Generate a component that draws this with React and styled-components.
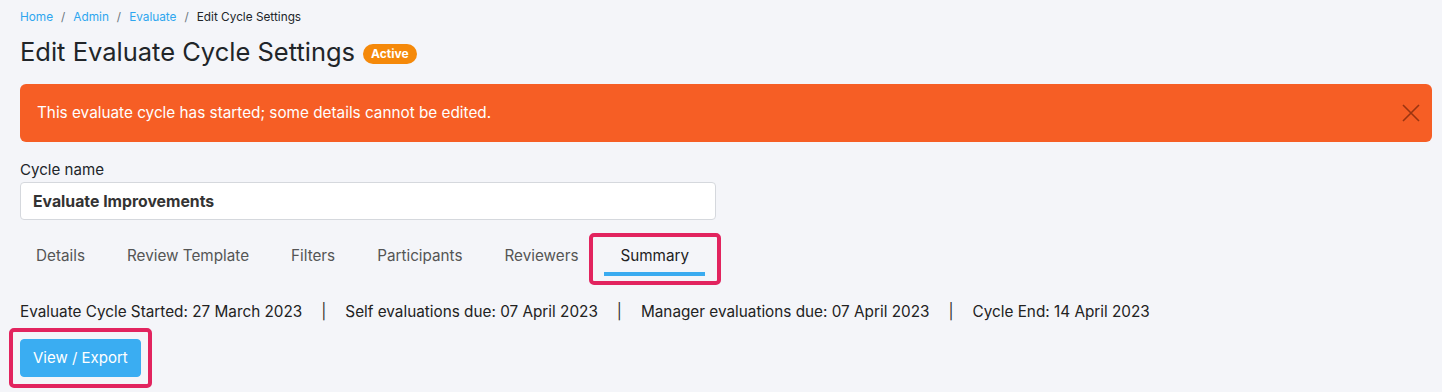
import styled, { createGlobalStyle } from "styled-components";

const GlobalStyle = createGlobalStyle`
  html, body {
    margin: 0;
    padding: 0;
    background: #f4f5f9;
  }
  body {
    font-family: Inter, "Noto Sans", sans-serif;
    color: #212529;
  }
`;

const tabs = ["Details", "Review Template", "Filters", "Participants", "Reviewers", "Summary"];

const dates = [
  "Evaluate Cycle Started: 27 March 2023",
  "Self evaluations due: 07 April 2023",
  "Manager evaluations due: 07 April 2023",
  "Cycle End: 14 April 2023",
];

const App = () => {
  return (
    <Page>
      <GlobalStyle />
      <Breadcrumb>
        <Crumb href="#">Home</Crumb>
        <Slash>/</Slash>
        <Crumb href="#">Admin</Crumb>
        <Slash>/</Slash>
        <Crumb href="#">Evaluate</Crumb>
        <Slash>/</Slash>
        <Current>Edit Cycle Settings</Current>
      </Breadcrumb>
      <TitleRow>
        <Title>Edit Evaluate Cycle Settings</Title>
        <Badge>Active</Badge>
      </TitleRow>
      <Alert>
        <span>This evaluate cycle has started; some details cannot be edited.</span>
        <CloseButton aria-label="Close">
          <svg width="18" height="18" viewBox="0 0 18 18" fill="none" stroke="currentColor" strokeWidth="1.6">
            <path d="M1 1L17 17M17 1L1 17" />
          </svg>
        </CloseButton>
      </Alert>
      <Field>
        <Label>Cycle name</Label>
        <Input defaultValue="Evaluate Improvements" />
      </Field>
      <TabList>
        {tabs.map((t) => (
          <Tab key={t} $active={t === "Summary"}>
            {t}
            {t === "Summary" && <Highlight $tab />}
          </Tab>
        ))}
      </TabList>
      <DatesLine>
        {dates.map((d, i) => (
          <span key={d}>
            {i > 0 && <Pipe>|</Pipe>}
            {d}
          </span>
        ))}
      </DatesLine>
      <ButtonWrap>
        <Button>View / Export</Button>
        <Highlight />
      </ButtonWrap>
    </Page>
  );
};

export default App;

const Page = styled.div`
  padding: 8px 10px 20px 20px;
`;

const Breadcrumb = styled.nav`
  display: flex;
  align-items: center;
  font-size: 11.8px;
  line-height: 18px;
`;

const Crumb = styled.a`
  color: #2ea6ef;
  text-decoration: none;
`;

const Slash = styled.span`
  color: #6c757d;
  margin: 0 8px;
`;

const Current = styled.span`
  color: #212529;
`;

const TitleRow = styled.div`
  display: flex;
  align-items: center;
  gap: 8px;
  margin-top: 9px;
  height: 34px;
`;

const Title = styled.h1`
  margin: 0;
  font-size: 25.5px;
  font-weight: 400;
  line-height: 34px;
  color: #212529;
`;

const Badge = styled.span`
  background: #f5890a;
  color: #fff;
  font-size: 12px;
  font-weight: 700;
  line-height: 14px;
  padding: 3px 8px;
  border-radius: 10px;
  margin-top: 4px;
`;

const Alert = styled.div`
  display: flex;
  align-items: center;
  justify-content: space-between;
  margin-top: 15px;
  background: #f65e25;
  color: #fff;
  border-radius: 6px;
  padding: 17px 12px 17px 17px;
  font-size: 15.3px;
  line-height: 24px;
`;

const CloseButton = styled.button`
  background: none;
  border: 0;
  padding: 0;
  display: flex;
  color: #9a3410;
  cursor: pointer;
`;

const Field = styled.div`
  margin-top: 16px;
  width: 696px;
`;

const Label = styled.div`
  font-size: 15.1px;
  line-height: 24px;
`;

const Input = styled.input`
  box-sizing: border-box;
  display: block;
  width: 100%;
  height: 38px;
  padding: 6px 12px;
  border: 1px solid #d5d8dd;
  border-radius: 4px;
  background: #fff;
  font-family: inherit;
  font-size: 15.8px;
  font-weight: 700;
  color: #333;
`;

const TabList = styled.div`
  display: flex;
  gap: 10px;
  margin-top: 16px;
`;

const Tab = styled.div`
  position: relative;
  padding: 8px 16px 0;
  height: 28px;
  font-size: 15.25px;
  line-height: 24px;
  color: ${(p) => (p.$active ? "#222" : "#555")};
  border-bottom: 4px solid ${(p) => (p.$active ? "#3aabf0" : "transparent")};
`;

const Highlight = styled.span`
  position: absolute;
  left: ${(p) => (p.$tab ? "-15px" : "-11px")};
  right: ${(p) => (p.$tab ? "-16px" : "-11px")};
  top: ${(p) => (p.$tab ? "-3px" : "-11px")};
  bottom: ${(p) => (p.$tab ? "-13px" : "-11px")};
  border: 4px solid #e2245f;
  border-radius: 5px;
  pointer-events: none;
`;

const DatesLine = styled.div`
  margin-top: 24px;
  font-size: 15.3px;
  line-height: 24px;
  color: #222;
  white-space: nowrap;
`;

const Pipe = styled.span`
  display: inline-block;
  margin: 0 19px;
  color: #333;
`;

const ButtonWrap = styled.div`
  position: relative;
  display: inline-block;
  margin-top: 15px;
`;

const Button = styled.button`
  display: block;
  height: 38px;
  padding: 6px 12px;
  background: #3aadf2;
  color: #fff;
  border: 1px solid #3aadf2;
  border-radius: 4px;
  font-family: inherit;
  font-size: 15px;
  line-height: 24px;
`;
